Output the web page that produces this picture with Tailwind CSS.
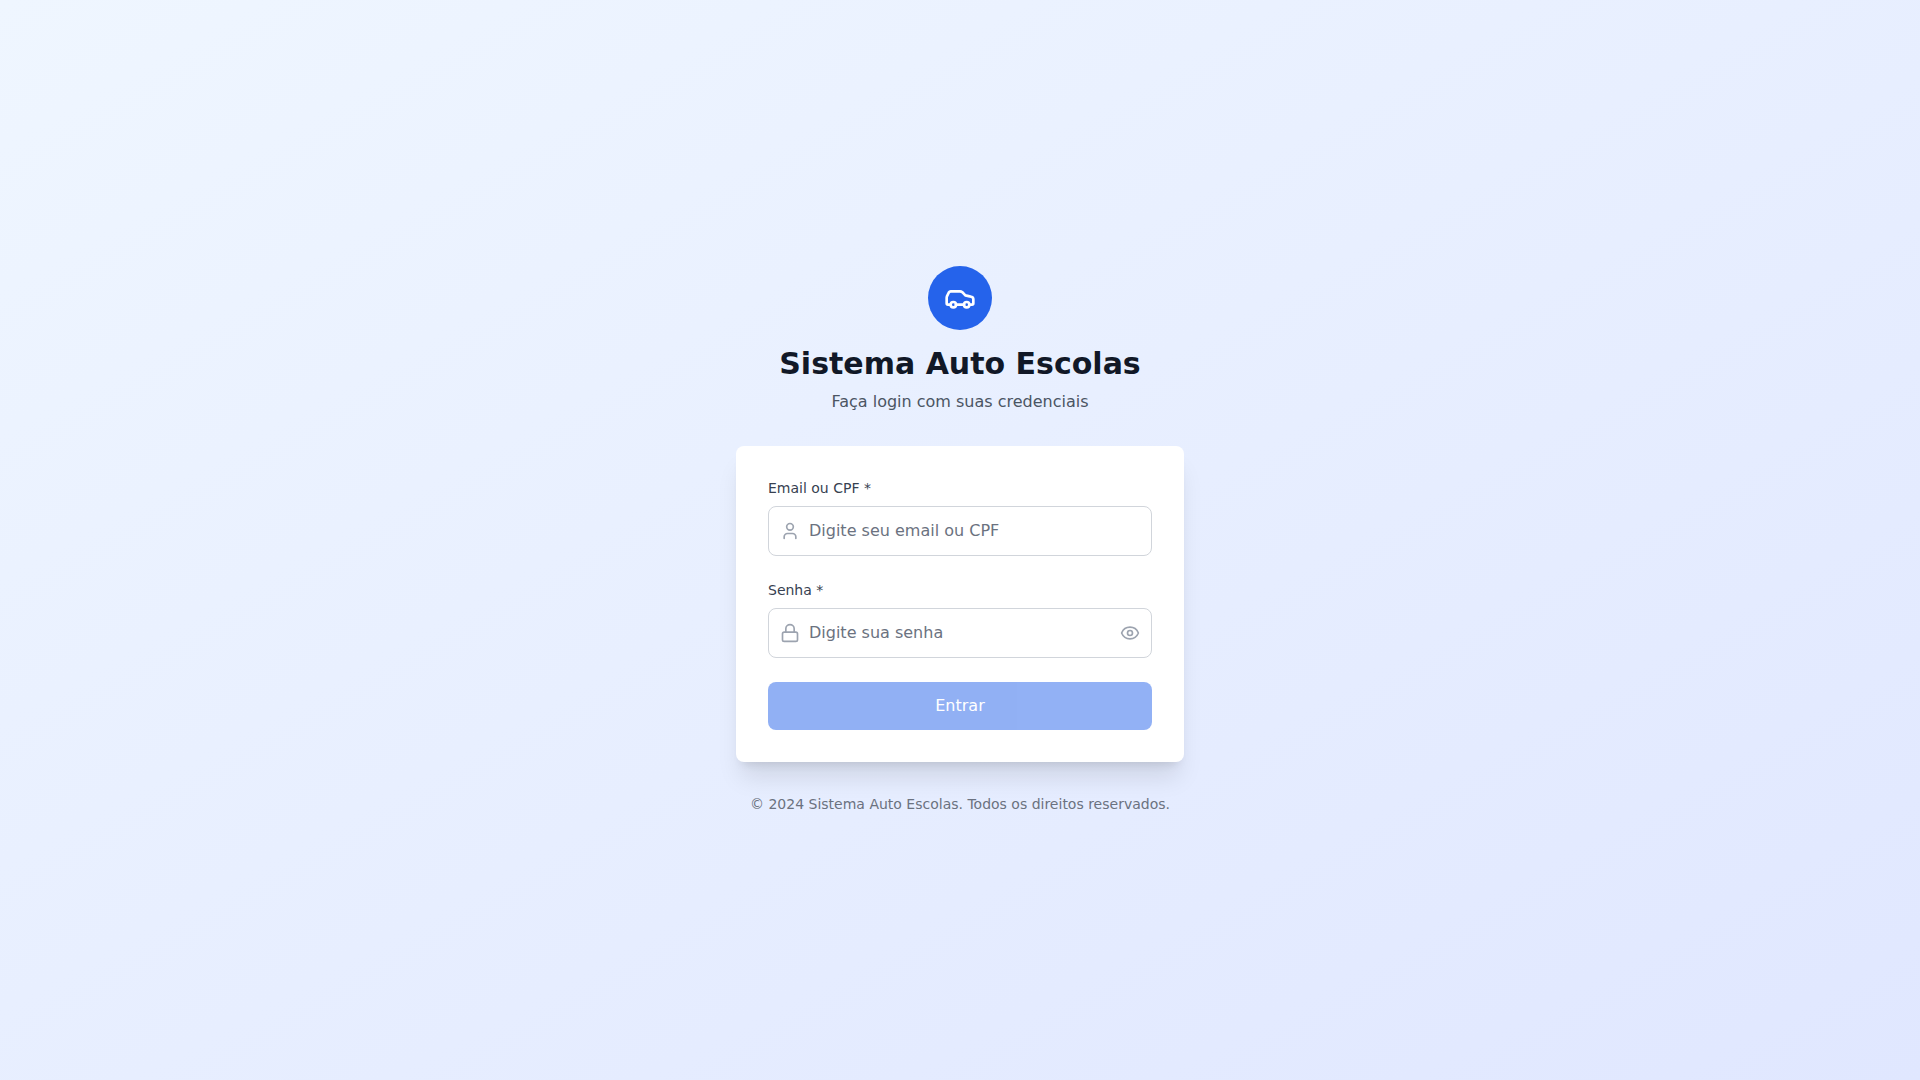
<!DOCTYPE html>
<html lang="pt-BR">
<head>
  <meta charset="utf-8">
  <meta name="viewport" content="width=device-width, initial-scale=1">
  <title>Sistema Auto Escolas</title>
  <script src="https://cdn.jsdelivr.net/npm/@tailwindcss/browser@4"></script>
</head>
<body class="font-['DejaVu_Sans',sans-serif]">
  <div class="min-h-screen bg-linear-to-br/srgb from-[#eff6ff] to-[#e0e7ff] flex items-center justify-center p-4">
    <div class="max-w-md w-full">
      <!-- Header -->
      <header class="text-center mb-8">
        <div class="inline-flex items-center justify-center w-16 h-16 bg-[#2563eb] rounded-full mb-4">
          <svg class="w-8 h-8 text-white" viewBox="0 0 24 24" fill="none" stroke="currentColor" stroke-width="2" stroke-linecap="round" stroke-linejoin="round" aria-hidden="true">
            <path d="M19 17h2c.6 0 1-.4 1-1v-3c0-.9-.7-1.7-1.5-1.9C18.7 10.600 16 10 16 10s-1.300-1.400-2.200-2.300c-.5-.4-1.100-.7-1.800-.7H5c-.6 0-1.100.4-1.400.9l-1.400 2.900A3.700 3.700 0 0 0 2 12v4c0 .6.4 1 1 1h2" />
            <circle cx="7" cy="17" r="2" />
            <path d="M9 17h6" />
            <circle cx="17" cy="17" r="2" />
          </svg>
        </div>
        <h1 class="text-3xl font-bold text-[#111827] mb-2">Sistema Auto Escolas</h1>
        <p class="text-[#4b5563]">Faça login com suas credenciais</p>
      </header>

      <!-- Login Form -->
      <main class="bg-white rounded-lg shadow-xl p-8">
        <form class="space-y-6">
          <div>
            <label for="login" class="block text-sm text-[#374151] mb-2">Email ou CPF *</label>
            <div class="relative">
              <svg class="absolute left-3 top-1/2 -translate-y-1/2 w-5 h-5 text-[#9ca3af]" viewBox="0 0 24 24" fill="none" stroke="currentColor" stroke-width="2" stroke-linecap="round" stroke-linejoin="round" aria-hidden="true">
                <path d="M19 21v-2a4 4 0 0 0-4-4H9a4 4 0 0 0-4 4v2" />
                <circle cx="12" cy="7" r="4" />
              </svg>
              <input type="text" id="login" placeholder="Digite seu email ou CPF" class="w-full pl-10 pr-4 py-3 border border-[#d1d5db] rounded-lg placeholder:text-[#6b7280] focus:outline-none focus:ring-2 focus:ring-blue-500">
            </div>
          </div>

          <div>
            <label for="password" class="block text-sm text-[#374151] mb-2">Senha *</label>
            <div class="relative">
              <svg class="absolute left-3 top-1/2 -translate-y-1/2 w-5 h-5 text-[#9ca3af]" viewBox="0 0 24 24" fill="none" stroke="currentColor" stroke-width="2" stroke-linecap="round" stroke-linejoin="round" aria-hidden="true">
                <rect width="18" height="11" x="3" y="11" rx="2" ry="2" />
                <path d="M7 11V7a5 5 0 0 1 10 0v4" />
              </svg>
              <input type="password" id="password" placeholder="Digite sua senha" class="w-full pl-10 pr-12 py-3 border border-[#d1d5db] rounded-lg placeholder:text-[#6b7280] focus:outline-none focus:ring-2 focus:ring-blue-500">
              <button type="button" aria-label="Mostrar senha" class="absolute right-3 top-1/2 -translate-y-1/2 text-[#9ca3af] hover:text-gray-600">
                <svg class="w-5 h-5" viewBox="0 0 24 24" fill="none" stroke="currentColor" stroke-width="2" stroke-linecap="round" stroke-linejoin="round" aria-hidden="true">
                  <path d="M2.062 12.348a1 1 0 0 1 0-.696 10.750 10.750 0 0 1 19.876 0 1 1 0 0 1 0 .696 10.750 10.750 0 0 1-19.876 0" />
                  <circle cx="12" cy="12" r="3" />
                </svg>
              </button>
            </div>
          </div>

          <button type="submit" disabled class="w-full bg-[#2563eb] text-white py-3 px-4 rounded-lg disabled:opacity-50">Entrar</button>
        </form>
      </main>

      <!-- Footer -->
      <footer class="text-center mt-8 text-sm text-[#6b7280]">
        <p>© 2024 Sistema Auto Escolas. Todos os direitos reservados.</p>
      </footer>
    </div>
  </div>
</body>
</html>
